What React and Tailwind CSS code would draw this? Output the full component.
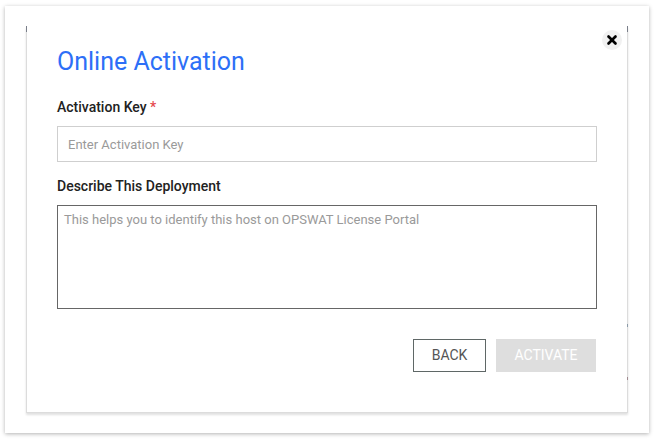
import { X } from 'lucide-react'

export default function App() {
  return (
    <div className="w-[654px] h-[440px] bg-white pt-[6px] pl-[5px] font-['Roboto',sans-serif]">
      {/* Outer card */}
      <div className="w-[644px] h-[427px] bg-white shadow-[0_1px_4px_rgba(0,0,0,0.3)] pt-[20px] pl-[21px]">
        {/* Dialog */}
        <div className="relative w-[602px] h-[387px] border-x border-b border-[#dcdcdc] shadow-[0_2px_2px_rgba(0,0,0,0.12)] pl-[30px] pr-[30px] pt-[21px]">
          <span className="absolute -left-px top-0 h-[6px] w-px bg-[#7a7f8a]" />
          <span className="absolute -right-px top-0 h-[6px] w-px bg-[#7a7f8a]" />
          <span className="absolute -right-px top-[298px] h-[3px] w-px bg-[#8a9aa8]" />
          <span className="absolute -right-px top-[351px] h-[3px] w-px bg-[#a08a90]" />

          <button className="absolute right-[5px] top-[4px] w-[20px] h-[20px] rounded-full bg-[#f1f1f1] flex items-center justify-center">
            <X className="w-[14px] h-[14px] text-black" strokeWidth={4.5} />
          </button>

          <h2 className="text-[25px] leading-[30px] text-[#2d6ff7] font-normal">Online Activation</h2>

          <label className="block mt-[22px] text-[14px] leading-[16px] font-medium text-[#222]">
            Activation Key <span className="text-[#e5484d]">*</span>
          </label>
          <input
            type="text"
            placeholder="Enter Activation Key"
            className="mt-[11px] block w-[540px] h-[36px] border border-[#cfcfcf] px-[10px] text-[13px] placeholder:text-[#9a9a9a] outline-none"
          />

          <label className="block mt-[16px] text-[14px] leading-[16px] font-medium text-[#222]">
            Describe This Deployment
          </label>
          <textarea
            placeholder="This helps you to identify this host on OPSWAT License Portal"
            className="mt-[11px] block w-[540px] h-[104px] border border-[#666] px-[6px] py-[5px] text-[13px] leading-[17px] placeholder:text-[#9a9a9a] resize-none outline-none"
          />

          <div className="mt-[30px] flex justify-end gap-[10px] pr-px">
            <button className="w-[73px] h-[33px] border border-[#5f6766] text-[14px] text-[#555] uppercase">Back</button>
            <button className="w-[100px] h-[33px] bg-[#dedede] text-[14px] text-white uppercase">Activate</button>
          </div>
        </div>
      </div>
    </div>
  )
}
